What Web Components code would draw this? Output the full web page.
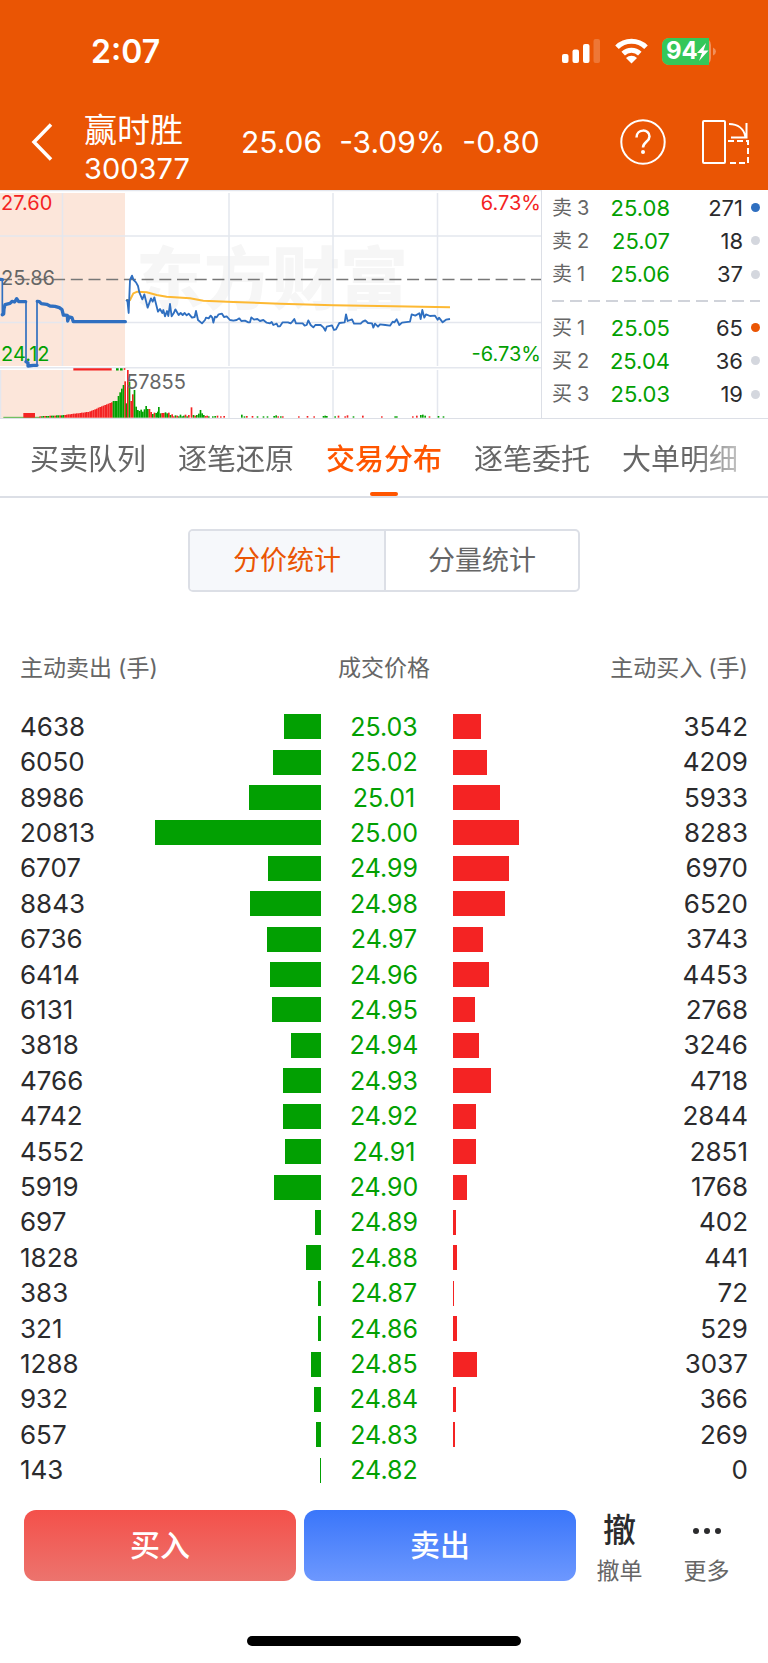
<!DOCTYPE html>
<html lang="zh-CN">
<head>
<meta charset="utf-8">
<meta name="viewport" content="width=device-width, initial-scale=1">
<title>赢时胜 300377</title>
<style>
	body{
		margin: 0;
		background: #fff;
		color: #2b2b2d;
		font-family: Inter, "Noto Sans CJK SC", sans-serif;
		--brand: #ea5504;
		--accent: #ff5500;
		--up: #f42323;
		--down: #02a002;
		--grey: #666;
		--line: #dcdfe6;
	}
</style>
</head>
<body>

<stock-page>
	<status-bar slot="top" time="2:07" battery="94"></status-bar>
	<quote-header slot="top" name="赢时胜" code="300377">
		<span>25.06</span><span>-3.09%</span><span>-0.80</span>
	</quote-header>
	<quote-panel>
		<minute-chart></minute-chart>
		<order-book slot="book"></order-book>
	</quote-panel>
	<tab-bar>
		<tab-item>买卖队列</tab-item>
		<tab-item>逐笔还原</tab-item>
		<tab-item active>交易分布</tab-item>
		<tab-item>逐笔委托</tab-item>
		<tab-item>大单明细</tab-item>
	</tab-bar>
	<segment-control>
		<segment-item active>分价统计</segment-item>
		<segment-item>分量统计</segment-item>
	</segment-control>
	<price-table></price-table>
	<trade-bar slot="bottom">
		<trade-button kind="buy">买入</trade-button>
		<trade-button kind="sell">卖出</trade-button>
		<tool-button slot="tools" label="撤单">撤</tool-button>
		<tool-button slot="tools" label="更多">
			<svg width="30" height="30" viewBox="0 0 30 30" fill="#2b2b2d"><circle cx="4" cy="16" r="3"/><circle cx="15" cy="16" r="3"/><circle cx="26" cy="16" r="3"/></svg>
		</tool-button>
	</trade-bar>
</stock-page>

<script>
class Base extends HTMLElement {

	constructor(){

		super()

		this.shadow = this.attachShadow({mode: 'open'})

	}

	connectedCallback() {

		this.shadow.innerHTML = `
			<style>
				:host, *{ box-sizing: border-box; }
				button{
					margin: 0;
					padding: 0;
					border: 0;
					background: none;
					color: inherit;
					font: inherit;
					cursor: pointer;
				}
				svg{ display: block; }
			</style>
		` + this.render()

	}

}

class StockPage extends Base {

	render(){

		return `
			<style>
				:host{
					display: flex;
					flex-direction: column;
					min-height: 100vh;
				}
				header{
					background: var(--brand);
					color: #fff;
				}
				main{
					flex: 1;
					display: flex;
					flex-direction: column;
				}
			</style>
			<header><slot name="top"></slot></header>
			<main><slot></slot></main>
			<slot name="bottom"></slot>
		`

	}

}

class StatusBar extends Base {

	render(){

		return `
			<style>
				:host{
					display: flex;
					align-items: center;
					justify-content: space-between;
					height: 102px;
					padding: 0 52px 0 91px;
				}
				time{
					font-size: 32px;
					font-weight: 600;
				}
				div{
					display: flex;
					align-items: center;
				}
				.wifi{ margin: 0 14px; }
				.battery{
					position: relative;
					font-size: 24px;
					font-weight: 700;
					line-height: 26px;
				}
				.battery span{
					position: absolute;
					top: 0;
					left: 4px;
				}
			</style>
			<time>${this.getAttribute('time')}</time>
			<div>
				<svg width="39" height="26" viewBox="0 0 39 26" fill="#fff">
					<rect x="0" y="16" width="6.5" height="9" rx="2"/>
					<rect x="10.5" y="11.5" width="6.5" height="13.5" rx="2"/>
					<rect x="21" y="6" width="6.5" height="19" rx="2"/>
					<rect x="31.5" y="1" width="6.5" height="24" rx="2" opacity=".2"/>
				</svg>
				<svg class="wifi" width="33" height="26" viewBox="0 0 33 26" fill="none" stroke="#fff" stroke-width="5">
					<path d="M2 9.3a20.6 20.6 0 0 1 29 0"/>
					<path d="M8.2 15.6a11.9 11.9 0 0 1 16.6 0"/>
					<path d="M11 20a8 8 0 0 1 11 0l-5.500 5.500z" fill="#fff" stroke="none"/>
				</svg>
				<div class="battery">
					<svg width="54" height="27" viewBox="0 0 54 27">
						<rect width="49" height="27" rx="7" fill="#fff" opacity=".35"/>
						<path d="M7 0h40v27H7a7 7 0 0 1-7-7V7a7 7 0 0 1 7-7z" fill="#34c759"/>
						<path d="M51 9.500q3 1.500 3 4t-3 4z" fill="#fff" opacity=".35"/>
						<path d="M44 5l-9 10h5l-3 8 9.500-10.500h-5z" fill="#fff"/>
					</svg>
					<span>${this.getAttribute('battery')}</span>
				</div>
			</div>
		`

	}

}

class QuoteHeader extends Base {

	render(){

		return `
			<style>
				:host{
					display: flex;
					align-items: center;
					height: 88px;
					padding: 0 18px 8px 30px;
				}
				.back{ margin-right: 30px; }
				h1{
					margin: 0;
					width: 157px;
					padding-top: 12px;
					font-size: 33px;
					font-weight: 400;
					line-height: 42px;
				}
				h1 small{
					display: block;
					font-size: 29px;
					line-height: 36px;
				}
				.price{
					flex: 1;
					display: flex;
					gap: 17px;
					font-size: 30px;
				}
				.help{ margin-right: 35px; }
			</style>
			<button class="back" aria-label="返回">
				<svg width="24" height="40" viewBox="0 0 24 40" fill="none" stroke="#fff" stroke-width="3.500"><path d="M21 2.500L4 20l17 17.500"/></svg>
			</button>
			<h1>${this.getAttribute('name')}<small>${this.getAttribute('code')}</small></h1>
			<div class="price"><slot></slot></div>
			<button class="help" aria-label="帮助">
				<svg width="46" height="46" viewBox="0 0 46 46" fill="none" stroke="#fff" stroke-width="2">
					<circle cx="23" cy="23" r="21.700"/>
					<path d="M16.500 18.500c0-9 13-9 13-1 0 5-6.500 5.500-6.500 11" stroke-width="2.500"/>
					<circle cx="23" cy="33" r="2" fill="#fff" stroke="none"/>
				</svg>
			</button>
			<button aria-label="横屏">
				<svg width="49" height="46" viewBox="0 0 49 46" fill="none" stroke="#fff" stroke-width="2">
					<rect x="2" y="2" width="22" height="42" rx="1"/>
					<path d="M28 5c9 0 15 5 16.500 13M45.500 4v14.500H30"/>
					<path d="M27 22h20v22H26" stroke-dasharray="6 3"/>
				</svg>
			</button>
		`

	}

}

class QuotePanel extends Base {

	render(){

		return `
			<style>
				:host{
					display: grid;
					grid-template-columns: 542fr 226fr;
					border-bottom: 1px solid var(--line);
				}
			</style>
			<slot></slot>
			<slot name="book"></slot>
		`

	}

}

// price lines, in thirds of a pixel from the top left of the plot
const PRE_LINE = '0,283 7,284 M7,389 11,387 12,372 15,359 30,355 36,349 44,351 50,341 56,350 77,350 M78,530 84,534 84,543 100,541 111,541 M112,349 118,350 124,356 140,358 150,363 165,364 178,368 186,374 190,390 202,391 203,408 207,396 216,398 220,410 376,410'
const PRE_DROPS = '7,283 7,389 M78,350 78,530 M111,541 111,349'
const PRICE_LINE = '378,348 382,345 386,384 390,285 396,272 401,285 408,292 414,303 418,322 427,343 433,328 443,368 453,340 458,350 463,337 474,380 480,372 487,384 490,375 495,394 501,378 505,393 510,357 515,394 521,385 526,373 536,390 542,384 548,390 554,384 560,391 566,386 576,398 584,396 588,378 594,405 606,415 615,405 618,398 626,400 632,392 637,398 640,413 645,395 650,397 656,388 666,386 672,396 680,394 690,405 700,407 710,405 718,400 724,408 735,407 745,412 750,412 754,397 762,404 772,402 780,408 790,405 800,413 810,415 815,411 820,420 830,416 834,424 840,424 848,412 864,412 872,415 877,410 883,402 888,415 908,415 914,422 920,420 925,406 932,420 940,427 946,420 962,420 970,427 976,437 980,425 996,421 1002,435 1008,433 1018,414 1034,412 1038,388 1043,408 1056,403 1062,416 1082,416 1088,410 1096,406 1104,414 1116,415 1120,428 1125,416 1134,425 1140,418 1156,420 1170,422 1178,410 1183,412 1190,403 1198,420 1206,413 1230,410 1235,388 1246,392 1258,385 1262,402 1267,375 1273,398 1278,388 1290,393 1305,392 1313,404 1317,398 1328,412 1338,404 1350,402'
const AVG_LINE = '378,345 390,345 400,325 412,320 440,322 470,330 500,335 570,340 610,347 700,351 840,356 1000,361 1180,364 1350,367'

// volume bars: x, top, colour
const VOLUMES = [
	[379,655,'g'],[383,555,'r'],[388,590,'g'],[393,648,'r'],[398,628,'r'],[403,615,'g'],[408,665,'g'],[413,675,'g'],[418,678,'g'],
	[423,674,'g'],[428,680,'g'],[433,673,'g'],[438,663,'g'],[443,672,'g'],[448,672,'r'],[453,681,'r'],[458,687,'g'],[463,683,'r'],
	[468,684,'g'],[473,680,'g'],[476,666,'g'],[481,685,'g'],[486,684,'r'],[491,684,'r'],[496,682,'g'],[501,685,'g'],[506,683,'r'],
	[511,690,'g'],[516,688,'r'],[521,694,'r'],[526,691,'g'],[531,692,'r'],[536,694,'g'],[541,689,'g'],[546,694,'g'],[551,692,'g'],
	[556,689,'r'],[561,694,'g'],[566,690,'r'],[574,667,'r'],[580,690,'g'],[585,692,'r'],[590,690,'g'],[596,686,'g'],[601,675,'g'],
	[606,685,'g'],[611,690,'g'],[616,693,'r'],[621,692,'r'],[626,694,'g'],[638,694,'g'],[645,693,'g'],[652,692,'r'],[662,694,'r'],
	[672,693,'r'],[725,689,'g'],[733,694,'g'],[740,693,'r'],[757,693,'r'],[772,694,'g'],[790,694,'g'],[802,694,'g'],[822,693,'g'],
	[828,691,'g'],[834,694,'r'],[842,694,'g'],[848,694,'r'],[896,694,'r'],[922,693,'r'],[942,694,'r'],[970,693,'g'],[975,692,'g'],
	[980,693,'g'],[1005,694,'g'],[1015,692,'r'],[1035,694,'r'],[1042,691,'r'],[1060,694,'g'],[1088,692,'r'],[1145,694,'r'],
	[1185,694,'g'],[1190,694,'g'],[1238,694,'r'],[1250,692,'r'],[1262,690,'g'],[1268,689,'g'],[1275,692,'g'],[1288,694,'r'],
	[1315,693,'g'],[1330,694,'g']
]

class MinuteChart extends Base {

	bars(){

		const colours = {r: '#f42323', g: '#02a002'}

		const bar = (x, top, c) => `<rect x="${x - 2}" y="${top}" width="5" height="${698 - top}" fill="${colours[c]}"/>`

		let pre = ''

		// call auction: matched volume grows towards the open
		for( let x = 120; x < 376; x += 5 ){

			let top, c = 'r'

			if( x < 200 ){

				top = 694 - Math.round((x - 120) / 20)
				c = x % 15 === 0 ? 'r' : 'g'

			} else if( x < 270 )

				top = 689 - Math.round((x - 200) / 8)

			else if( x < 337 )

				top = 679 - Math.round((x - 270) * 0.42)

			else {

				top = x < 352 ? 648 : 640 - Math.round((x - 352) * 2.2)
				c = x > 370 ? 'r' : 'g'

			}

			pre += bar(x, top, c)

		}

		return pre + VOLUMES.map(v => bar(...v)).join('')

	}

	render(){

		return `
			<style>
				:host{
					display: block;
					border-right: 1px solid var(--line);
				}
				svg{
					width: 100%;
					height: auto;
				}
				text{
					font-size: 20px;
					fill: var(--grey);
				}
				.up{ fill: var(--up); }
				.down{ fill: var(--down); }
				.end{ text-anchor: end; }
				.mark{
					font-family: "Noto Sans CJK SC", sans-serif;
					font-size: 68px;
					font-weight: 900;
					fill: #f6f6f6;
				}
			</style>
			<svg viewBox="0 0 541 228">
				<path d="M0 3h125v173H0zM0 180h125v48H0z" fill="#fce6da"/>
				<text class="mark" x="136" y="114">东方财富</text>
				<g fill="none" stroke="#e4e7ee" stroke-width="1.500">
					<path d="M0 .5h541M0 46h541M0 132.500h541M0 177.700h541M.5 180v48"/>
					<path d="M62.500 3v173m0 4v48M229 3v173m0 4v48M333 3v173m0 4v48M437.500 3v173m0 4v48"/>
				</g>
				<path d="M0 89.500h541" stroke="#777" stroke-width="1.300" stroke-dasharray="12 5.700"/>
				<text class="up" x="1" y="20">27.60</text>
				<text x="1" y="95">25.86</text>
				<text class="down" x="1" y="171">24.12</text>
				<text class="up end" x="541" y="20">6.73%</text>
				<text class="down end" x="541" y="171">-6.73%</text>
				<g transform="translate(0 -5) scale(.33333)" fill="none" stroke="#2f6fc0" stroke-linejoin="round">
					<path d="M10 697H120" stroke="#02a002" stroke-width="2"/>
					<path d="M70 684h35v14H70z" fill="#f42323" stroke="none"/>
					<path d="M220 553H335" stroke="#f42323" stroke-width="7"/>
					<path d="M348 553h8m4 0h8" stroke="#02a002" stroke-width="7"/>
					<path d="M371 552h5" stroke="#f42323" stroke-width="5"/>
					<g stroke="none">${this.bars()}</g>
					<path d="M${AVG_LINE}" stroke="#fdb933" stroke-width="6"/>
					<path d="M${PRE_DROPS}" stroke-width="5"/>
					<path d="M${PRE_LINE}" stroke-width="10" stroke-linecap="round"/>
					<path d="M${PRICE_LINE}" stroke-width="5.500"/>
				</g>
				<text x="126" y="199">57855</text>
			</svg>
		`

	}

}

const BOOK = [
	['卖', 3, '25.08', 271, '#2f6fc0'],
	['卖', 2, '25.07', 18],
	['卖', 1, '25.06', 37],
	null,
	['买', 1, '25.05', 65, '#ea5504'],
	['买', 2, '25.04', 36],
	['买', 3, '25.03', 19]
]

class OrderBook extends Base {

	render(){

		return `
			<style>
				:host{
					display: flex;
					flex-direction: column;
					padding: 1px 8px 7px 10px;
				}
				.row{
					flex: 1;
					display: grid;
					grid-template-columns: 40px 78px 1fr 9px;
					align-items: center;
					font-size: 22px;
					line-height: 28px;
					text-align: right;
				}
				.side{
					display: flex;
					gap: 5px;
					font-size: 20px;
					color: var(--grey);
				}
				.price{ color: var(--down); }
				.size{ padding-right: 8px; }
				i{
					height: 9px;
					border-radius: 50%;
					background: #d4d7de;
				}
				.gap{
					display: flex;
					align-items: center;
					height: 20px;
				}
				.gap::before{
					content: '';
					flex: 1;
					height: 2px;
					background: repeating-linear-gradient(to right, #d0d3da 0 12px, transparent 12px 18px);
				}
			</style>
			${BOOK.map(r => r ? `
				<div class="row">
					<span class="side"><span>${r[0]}</span><span>${r[1]}</span></span>
					<span class="price">${r[2]}</span>
					<span class="size">${r[3]}</span>
					<i${r[4] ? ` style="background: ${r[4]}"` : ''}></i>
				</div>
			` : '<div class="gap"></div>').join('')}
		`

	}

}

class TabBar extends Base {

	render(){

		return `
			<style>
				:host{
					display: block;
					border-bottom: 2px solid var(--line);
				}
				nav{
					display: flex;
					gap: 32px;
					height: 77px;
					padding: 0 30px;
					-webkit-mask-image: linear-gradient(to right, #000 90%, transparent 100%);
					mask-image: linear-gradient(to right, #000 90%, transparent 100%);
				}
			</style>
			<nav><slot></slot></nav>
		`

	}

}

class TabItem extends Base {

	render(){

		return `
			<style>
				:host{
					display: flex;
					font-size: 29px;
					color: var(--grey);
				}
				:host([active]){
					color: var(--accent);
					font-weight: 500;
				}
				button{
					display: flex;
					flex-direction: column;
					align-items: center;
					justify-content: space-between;
					padding-top: 20px;
					line-height: 42px;
					white-space: nowrap;
				}
				:host([active]) button::after{
					content: '';
					width: 28px;
					height: 4px;
					border-radius: 2px;
					background: var(--accent);
				}
			</style>
			<button><slot></slot></button>
		`

	}

}

class SegmentControl extends Base {

	render(){

		return `
			<style>
				:host{
					align-self: center;
					display: grid;
					grid-template-columns: 1fr 1fr;
					width: 51%;
					margin-top: 31px;
					border: 2px solid var(--line);
					border-radius: 5px;
					overflow: hidden;
				}
				::slotted(:not(:first-child)){ border-left: 2px solid var(--line); }
			</style>
			<slot></slot>
		`

	}

}

class SegmentItem extends Base {

	render(){

		return `
			<style>
				:host{
					display: block;
					color: var(--grey);
					font-size: 27px;
				}
				:host([active]){
					background: #f6f8fb;
					color: var(--brand);
				}
				button{
					width: 100%;
					line-height: 59px;
				}
			</style>
			<button><slot></slot></button>
		`

	}

}

// active sell, price, active buy
const TRADES = [
	[4638, '25.03', 3542],
	[6050, '25.02', 4209],
	[8986, '25.01', 5933],
	[20813, '25.00', 8283],
	[6707, '24.99', 6970],
	[8843, '24.98', 6520],
	[6736, '24.97', 3743],
	[6414, '24.96', 4453],
	[6131, '24.95', 2768],
	[3818, '24.94', 3246],
	[4766, '24.93', 4718],
	[4742, '24.92', 2844],
	[4552, '24.91', 2851],
	[5919, '24.90', 1768],
	[697, '24.89', 402],
	[1828, '24.88', 441],
	[383, '24.87', 72],
	[321, '24.86', 529],
	[1288, '24.85', 3037],
	[932, '24.84', 366],
	[657, '24.83', 269],
	[143, '24.82', 0]
]

class PriceTable extends Base {

	render(){

		const max = Math.max(...TRADES.map(t => Math.max(t[0], t[2])))

		const bar = v => `<td class="bar"><i style="width: ${v / max * 100}%"></i></td>`

		return `
			<style>
				:host{
					flex: 1;
					display: flex;
					margin-top: 35px;
					padding: 0 20px;
				}
				table{
					flex: 1;
					display: flex;
					flex-direction: column;
				}
				tbody{
					flex: 1;
					display: grid;
					grid-auto-rows: 1fr;
				}
				tr{
					display: grid;
					grid-template-columns: 135fr 166fr 132fr 166fr 129fr;
					align-items: center;
				}
				thead tr{
					grid-template-columns: 1fr 1fr 1fr;
					height: 82px;
				}
				th, td{ padding: 0; }
				th{
					font-size: 23px;
					font-weight: 400;
					line-height: 34px;
					color: var(--grey);
					text-align: center;
				}
				th:first-child{ text-align: left; }
				th:last-child{ text-align: right; }
				th span{ margin-left: 6px; }
				td{
					font-size: 26px;
					line-height: 34px;
				}
				td:last-child{ text-align: right; }
				.price{
					padding-right: 6px;
					color: var(--down);
					font-size: 25px;
					text-align: center;
				}
				.bar{ display: flex; }
				.bar i{
					height: 25px;
					background: var(--up);
				}
				.bar:nth-child(2){ justify-content: flex-end; }
				.bar:nth-child(2) i{ background: var(--down); }
			</style>
			<table>
				<thead>
					<tr><th>主动卖出<span>(手)</span></th><th>成交价格</th><th>主动买入<span>(手)</span></th></tr>
				</thead>
				<tbody>
					${TRADES.map(t => `<tr><td>${t[0]}</td>${bar(t[0])}<td class="price">${t[1]}</td>${bar(t[2])}<td>${t[2]}</td></tr>`).join('')}
				</tbody>
			</table>
		`

	}

}

class TradeBar extends Base {

	render(){

		return `
			<style>
				:host{ display: block; }
				.actions{
					display: flex;
					align-items: flex-start;
					padding: 22px 0 50px 24px;
				}
				.trade{
					flex: 1;
					display: grid;
					grid-template-columns: 1fr 1fr;
					gap: 8px;
				}
				.tools{
					display: grid;
					grid-template-columns: 1fr 1fr;
					width: 192px;
					padding-right: 18px;
				}
				.home{
					width: 274px;
					height: 10px;
					margin: 0 auto 17px;
					border-radius: 5px;
					background: #000;
				}
			</style>
			<div class="actions">
				<div class="trade"><slot></slot></div>
				<div class="tools"><slot name="tools"></slot></div>
			</div>
			<div class="home"></div>
		`

	}

}

class TradeButton extends Base {

	render(){

		const buy = this.getAttribute('kind') === 'buy'

		return `
			<style>
				:host{ display: block; }
				button{
					width: 100%;
					border-radius: 12px;
					background: linear-gradient(`+(buy ? '#f4504a, #ec746e' : '#3a76fa, #6d98fe')+`);
					color: #fff;
					font-size: 30px;
					font-weight: 500;
					line-height: 71px;
				}
			</style>
			<button><slot></slot></button>
		`

	}

}

class ToolButton extends Base {

	render(){

		return `
			<style>
				:host{ display: block; }
				button{
					width: 100%;
					display: flex;
					flex-direction: column;
					align-items: center;
				}
				b{
					display: flex;
					align-items: center;
					height: 40px;
					font-size: 33px;
					font-weight: 500;
					line-height: 40px;
				}
				span{
					margin-top: 6px;
					font-size: 23px;
					line-height: 30px;
					color: var(--grey);
				}
			</style>
			<button><b><slot></slot></b><span>${this.getAttribute('label')}</span></button>
		`

	}

}

customElements.define('stock-page', StockPage)
customElements.define('status-bar', StatusBar)
customElements.define('quote-header', QuoteHeader)
customElements.define('quote-panel', QuotePanel)
customElements.define('minute-chart', MinuteChart)
customElements.define('order-book', OrderBook)
customElements.define('tab-bar', TabBar)
customElements.define('tab-item', TabItem)
customElements.define('segment-control', SegmentControl)
customElements.define('segment-item', SegmentItem)
customElements.define('price-table', PriceTable)
customElements.define('trade-bar', TradeBar)
customElements.define('trade-button', TradeButton)
customElements.define('tool-button', ToolButton)
</script>
</body>
</html>
